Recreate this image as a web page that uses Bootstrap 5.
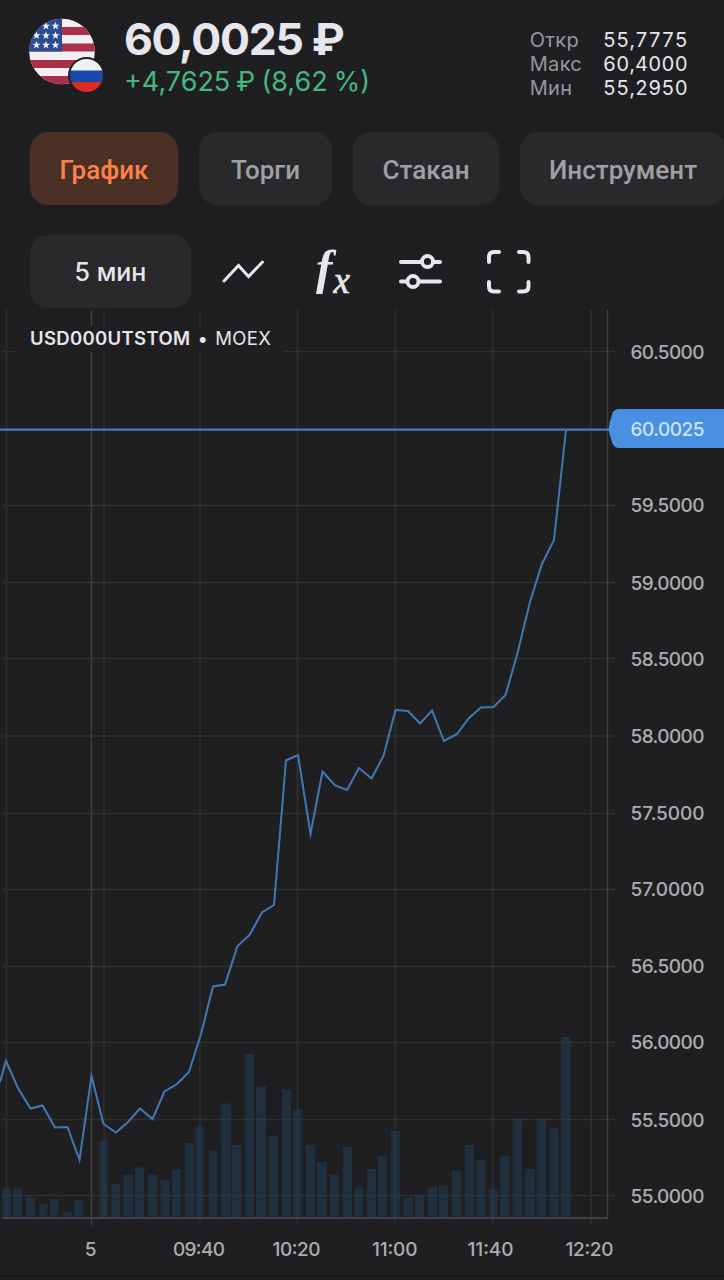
<!DOCTYPE html>
<html lang="ru" data-bs-theme="dark">
<head>
<meta charset="utf-8">
<meta name="viewport" content="width=device-width, initial-scale=1">
<title>USD000UTSTOM</title>
<link href="https://cdn.jsdelivr.net/npm/bootstrap@5.3.0/dist/css/bootstrap.min.css" rel="stylesheet">
<style>
  body { background: #1f1f21; color: #e7e6ec; font-family: Inter, sans-serif; overflow: hidden; }
  .quote-head { height: 132px; padding: 18px 36px 0 28px; }
  .quote-info { margin-left: 16px; }
  .quote-price { font-size: 44.5px; line-height: 43px; font-weight: 700; letter-spacing: -1.3px; word-spacing: 0; }
  .quote-change { font-size: 27px; line-height: 42px; color: #45b880; letter-spacing: 0; word-spacing: -1.5px; }
  .quote-stats { font-size: 20px; line-height: 24.2px; padding-top: 10px; column-gap: 21px; grid-template-columns: auto auto; }
  .quote-stats dt { font-weight: 400; color: #98969e; letter-spacing: .3px; }
  .quote-stats dd { font-variant-numeric: tabular-nums; letter-spacing: .25px; }
  .tab-strip { padding-left: 30px; gap: 21px; height: 103px; }
  .pill { --bs-btn-border-width: 0; --bs-btn-border-radius: 18px; height: 73px; padding: 3px 0 0; flex: none;
    --bs-btn-bg: #29292b; --bs-btn-color: #a19fa7; --bs-btn-font-size: 26px; font-family: Roboto, sans-serif; font-weight: 500; }
  .pill.active { --bs-btn-active-bg: #4b3026; --bs-btn-active-color: #ff8149; }
  .pill-a { width: 148px; } .pill-b { width: 133px; } .pill-c { width: 146px; } .pill-d { width: 206px; }
  .tool-row { padding-left: 30px; height: 75px; }
  .pill-time { width: 161px; --bs-btn-color: #e7e6ec; font-family: Inter, sans-serif; --bs-btn-font-size: 25px; }
  .tool-icons { margin-left: 17px; height: 73px; }
  .chart-area { height: 970px; }
  .symbol-tag { left: 16px; top: 16px; width: 267px; height: 26px; padding-left: 14px; background: #1f1f21; font-size: 18.5px; line-height: 25px; letter-spacing: .33px; }
  .symbol-dot { margin: 0 1.5px; }
  .axis-label { font: 500 19px Inter, sans-serif; fill: #adadb1; }
</style>
</head>
<body>
<header class="quote-head d-flex align-items-start">
  <svg width="80" height="80" viewBox="28 18 80 80" class="flex-shrink-0" role="img" aria-label="USD/RUB">
    <defs>
      <clipPath id="us"><circle cx="62" cy="51.500" r="32.800"/></clipPath>
      <clipPath id="ru"><circle cx="86.500" cy="75.500" r="16.500"/></clipPath>
      <path id="star" d="M0-4.200 1-1.300 4-1.300 1.600.500 2.500 3.400 0 1.700-2.500 3.400-1.600.500-4-1.300-1-1.300Z" fill="#f1f2f8"/>
    </defs>
    <g clip-path="url(#us)">
      <path fill="#f3f0f3" d="M28 18h70v70H28z"/>
      <path fill="#aa3049" d="M28 27h70v8H28zM28 43.500h70v8H28zM28 60h70v8H28zM28 76h70v9H28z"/>
      <path fill="#2b4b93" d="M28 18h34v33.500H28z"/>
      <use href="#star" x="46" y="26"/><use href="#star" x="55.500" y="26"/>
      <use href="#star" x="36.500" y="35.500"/><use href="#star" x="46" y="35.500"/><use href="#star" x="55.500" y="35.500"/>
      <use href="#star" x="36.500" y="45"/><use href="#star" x="46" y="45"/><use href="#star" x="55.500" y="45"/>
    </g>
    <circle cx="86.500" cy="75.500" r="18.500" fill="#1f1f21"/>
    <g clip-path="url(#ru)">
      <path fill="#f0f0f3" d="M68 57h38v14H68z"/>
      <path fill="#1649a9" d="M68 70.500h38v12H68z"/>
      <path fill="#dd2b20" d="M68 82h38v13H68z"/>
    </g>
  </svg>
  <div class="quote-info flex-grow-1 text-nowrap">
    <div class="quote-price">60,0025 ₽</div>
    <div class="quote-change">+4,7625 ₽ (8,62 %)</div>
  </div>
  <dl class="quote-stats d-grid m-0">
    <dt>Откр</dt><dd class="m-0">55,7775</dd>
    <dt>Макс</dt><dd class="m-0">60,4000</dd>
    <dt>Мин</dt><dd class="m-0">55,2950</dd>
  </dl>
</header>

<nav class="tab-strip d-flex align-items-start overflow-hidden">
  <button type="button" class="btn pill pill-a active">График</button>
  <button type="button" class="btn pill pill-b">Торги</button>
  <button type="button" class="btn pill pill-c">Стакан</button>
  <button type="button" class="btn pill pill-d">Инструмент</button>
</nav>

<div class="tool-row d-flex align-items-start">
  <button type="button" class="btn pill pill-time">5 мин</button>
  <svg class="tool-icons" width="340" height="73" viewBox="208 235 340 73" fill="none" stroke="#e7e6ec" stroke-width="3" stroke-linecap="round" stroke-linejoin="round">
    <path d="M224 281 238.500 265.500 248.500 276.500 262.500 262" stroke-linejoin="miter"/>
    <g fill="#e7e6ec" stroke="none" font-family="Liberation Serif, serif" font-style="italic">
      <text x="316" y="284" font-size="49" font-weight="700">f</text>
      <text x="333.500" y="293" font-size="37" stroke="#e7e6ec" stroke-width=".7">x</text>
    </g>
    <g stroke-width="4">
      <path d="M401 262H421M434 262H440M401 281.500H406M420 281.500H440"/>
      <circle cx="427.500" cy="261.500" r="5.500" stroke-width="3.800"/><circle cx="413" cy="281.500" r="5.500" stroke-width="3.800"/>
      <path d="M489 262V257Q489 252 494 252H499M519 252H523Q528.500 252 528.500 257V262M489 282V286.500Q489 291.500 494 291.500H499M519 291.500H523Q528.500 291.500 528.500 286.500V282"/>
    </g>
  </svg>
</div>

<main class="chart-area position-relative">
  <svg class="d-block" width="724" height="970" viewBox="0 310 724 970">
    <path fill="none" stroke="#303033" stroke-width="1.600" d="M2 351.500H615M2 505.500H615M2 582.500H615M2 658.500H615M2 736H615M2 813.500H615M2 889.500H615M2 966.500H615M2 1042.500H615M2 1119.500H615M2 1195.500H615M6.500 310V1218M104 310V1218M200 310V1225M297.500 310V1225M395 310V1225M493 310V1225M591 310V1225"/>
    <path fill="none" stroke="#414144" stroke-width="1.400" d="M91.500 310V1225M607.500 310V1218"/>
    <path fill="none" stroke="#424246" stroke-width="2" d="M2 1218H608"/>
    <path fill="#20405c" fill-opacity=".5" d="M2 1187.500h9V1218H2zM13.500 1187.500h8.500V1218h-8.500zM26 1197.500h9V1218h-9zM39.500 1204h8V1218h-8zM50 1199h8.500V1218H50zM63 1212h8.500V1218H63zM74.500 1200h8.500V1218h-8.500zM99.500 1141h8.500V1218h-8.500zM111.500 1184h8.500V1218h-8.500zM123.500 1175h9.500V1218h-9.500zM135 1167.500h9V1218h-9zM148 1175h9V1218h-9zM160.500 1180h9V1218h-9zM172 1169h8.500V1218H172zM185 1143h9V1218h-9zM195.500 1126.500h8.500V1218h-8.500zM209 1150.500h8V1218h-8zM221 1103.500h10V1218h-10zM232 1145h9.500V1218H232zM245 1054h9V1218h-9zM256 1086h10V1218h-10zM269 1136h9V1218h-9zM282 1089.500h9V1218h-9zM293.500 1110h8.500V1218h-8.500zM306 1145h9V1218h-9zM317 1162h9.500V1218H317zM330 1175h9V1218h-9zM343 1147h9V1218h-9zM354.500 1187.500h8.500V1218h-8.500zM367 1169h9V1218h-9zM378 1156h9V1218h-9zM391 1131h9V1218h-9zM403.500 1197.500h9.500V1218h-9.500zM415 1195h9V1218h-9zM428 1187.500h9V1218h-9zM439 1186h9V1218h-9zM452 1171h9V1218h-9zM465 1145h9V1218h-9zM476 1160h9V1218h-9zM489 1189.500h8.500V1218H489zM500 1156h9V1218h-9zM512.500 1119h9.500V1218h-9.500zM525 1169h9.500V1218H525zM536.500 1119h9.500V1218h-9.500zM549.500 1128.500h9V1218h-9zM561 1037h9.500V1218H561z"/>
    <polyline fill="none" stroke="#4377b4" stroke-width="2" stroke-miterlimit="8" points="0,1082 6,1061 18,1088 30.500,1108.500 42.500,1105.500 55,1127.500 67.500,1127 79.500,1160 91.500,1076 103.500,1124 116,1132.500 128,1122 140,1108.500 152.500,1119 164.500,1091.500 177,1084 189,1072 201,1034 213,986.500 225,984.500 237.500,946 249.500,935 262,912.500 274,905 286,760.500 298,755 310.500,834 322.500,771.500 335,785.500 347,790 359,768 371.500,778.500 383.500,756 395.500,710 408,711 420,723.500 432,710.500 444,741 457,734 469,718 481,707.500 493.500,707 505.500,695 517,655 530,602 542,564 554,540 566,430"/>
    <path d="M0 429.700H612" stroke="#457ab8" stroke-width="2.200"/>
    <path fill="#4a90e2" d="M724 409H619Q614.500 409 612.500 413L609.500 423Q608 428.500 609.500 434L612.500 443.500Q614.500 448 619 448H724Z"/>
    <g class="axis-label">
      <text x="630.500" y="358.500" textLength="74">60.5000</text>
      <text x="630.500" y="436" textLength="74" style="fill:#c9e4fb">60.0025</text>
      <text x="630.500" y="512" textLength="74">59.5000</text>
      <text x="630.500" y="589.500" textLength="74">59.0000</text>
      <text x="630.500" y="665.500" textLength="74">58.5000</text>
      <text x="630.500" y="742.500" textLength="74">58.0000</text>
      <text x="630.500" y="820" textLength="74">57.5000</text>
      <text x="630.500" y="896" textLength="74">57.0000</text>
      <text x="630.500" y="973" textLength="74">56.5000</text>
      <text x="630.500" y="1049" textLength="74">56.0000</text>
      <text x="630.500" y="1126.500" textLength="74">55.5000</text>
      <text x="630.500" y="1202.500" textLength="74">55.0000</text>
      <text x="90.500" y="1256" text-anchor="middle">5</text>
      <text x="173" y="1256" textLength="52">09:40</text>
      <text x="272.500" y="1256" textLength="48">10:20</text>
      <text x="372" y="1256" textLength="45.500">11:00</text>
      <text x="467.500" y="1256" textLength="46">11:40</text>
      <text x="565.500" y="1256" textLength="48">12:20</text>
    </g>
    <path d="M0 1276H724" stroke="#18181a" stroke-width="2"/>
  </svg>
  <div class="symbol-tag position-absolute text-nowrap"><span class="fw-semibold">USD000UTSTOM</span> <span class="symbol-dot">•</span> <span>MOEX</span></div>
</main>
<script src="https://cdn.jsdelivr.net/npm/bootstrap@5.3.0/dist/js/bootstrap.bundle.min.js"></script>
</body>
</html>
